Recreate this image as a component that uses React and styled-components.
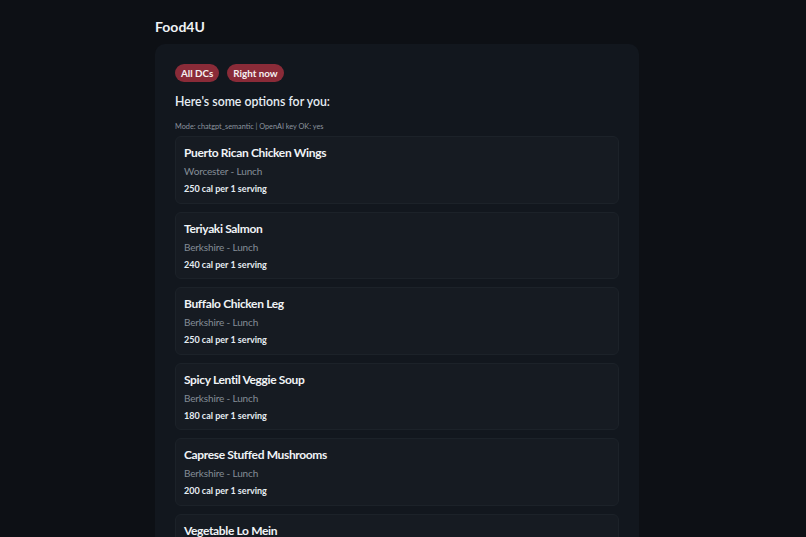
import styled, { createGlobalStyle } from 'styled-components';

const GlobalStyle = createGlobalStyle`
  html, body {
    margin: 0;
    background: #0d1015;
    color: #e6edf3;
    font-family: Lato, "Noto Sans", sans-serif;
  }
`;

const Page = styled.div`
  width: 484px;
  margin-left: calc(50% - 248px);
  padding-top: 16px;
`;

const Title = styled.h1`
  margin: 0 0 6px;
  font-size: 14px;
  line-height: 22px;
  font-weight: 700;
  color: #f0f3f6;
`;

const Panel = styled.section`
  background: #12171e;
  border-radius: 10px;
  padding: 20px;
`;

const Pills = styled.div`
  display: flex;
  gap: 8px;
`;

const Pill = styled.span`
  display: inline-flex;
  align-items: center;
  height: 18px;
  padding: 0 6px;
  border-radius: 9px;
  background: #8a2b38;
  color: #f5f0f1;
  font-size: 9.8px;
  font-weight: 700;
`;

const Heading = styled.p`
  margin: 12px 0 0;
  font-size: 12.3px;
  line-height: 16px;
  font-weight: 600;
  color: #e6edf3;
`;

const Mode = styled.p`
  margin: 12px 0 4px;
  font-size: 7.3px;
  line-height: 10px;
  color: #8b949e;
`;

const List = styled.div`
  display: flex;
  flex-direction: column;
  gap: 8px;
`;

const Card = styled.div`
  background: #161b22;
  border: 1px solid #1c2229;
  border-radius: 6px;
  padding: 8px 8px 7.5px;
`;

const Name = styled.div`
  font-size: 12px;
  line-height: 16px;
  font-weight: 700;
  letter-spacing: -0.35px;
  color: #f0f3f6;
`;

const Place = styled.div`
  margin-top: 3px;
  font-size: 10px;
  line-height: 14px;
  letter-spacing: -0.15px;
  color: #848d97;
`;

const Calories = styled.div`
  margin-top: 5px;
  font-size: 9px;
  line-height: 12px;
  font-weight: 700;
  color: #e6edf3;
`;

const items = [
  { name: 'Puerto Rican Chicken Wings', place: 'Worcester', cal: 250 },
  { name: 'Teriyaki Salmon', place: 'Berkshire', cal: 240 },
  { name: 'Buffalo Chicken Leg', place: 'Berkshire', cal: 250 },
  { name: 'Spicy Lentil Veggie Soup', place: 'Berkshire', cal: 180 },
  { name: 'Caprese Stuffed Mushrooms', place: 'Berkshire', cal: 200 },
  { name: 'Vegetable Lo Mein', place: 'Berkshire', cal: 220 },
];

export default function App() {
  return (
    <>
      <GlobalStyle />
      <Page>
        <Title>Food4U</Title>
        <Panel>
          <Pills>
            <Pill>All DCs</Pill>
            <Pill>Right now</Pill>
          </Pills>
          <Heading>Here's some options for you:</Heading>
          <Mode>Mode: chatgpt_semantic | OpenAI key OK: yes</Mode>
          <List>
            {items.map((item) => (
              <Card key={item.name}>
                <Name>{item.name}</Name>
                <Place>{item.place} - Lunch</Place>
                <Calories>{item.cal} cal per 1 serving</Calories>
              </Card>
            ))}
          </List>
        </Panel>
      </Page>
    </>
  );
}
